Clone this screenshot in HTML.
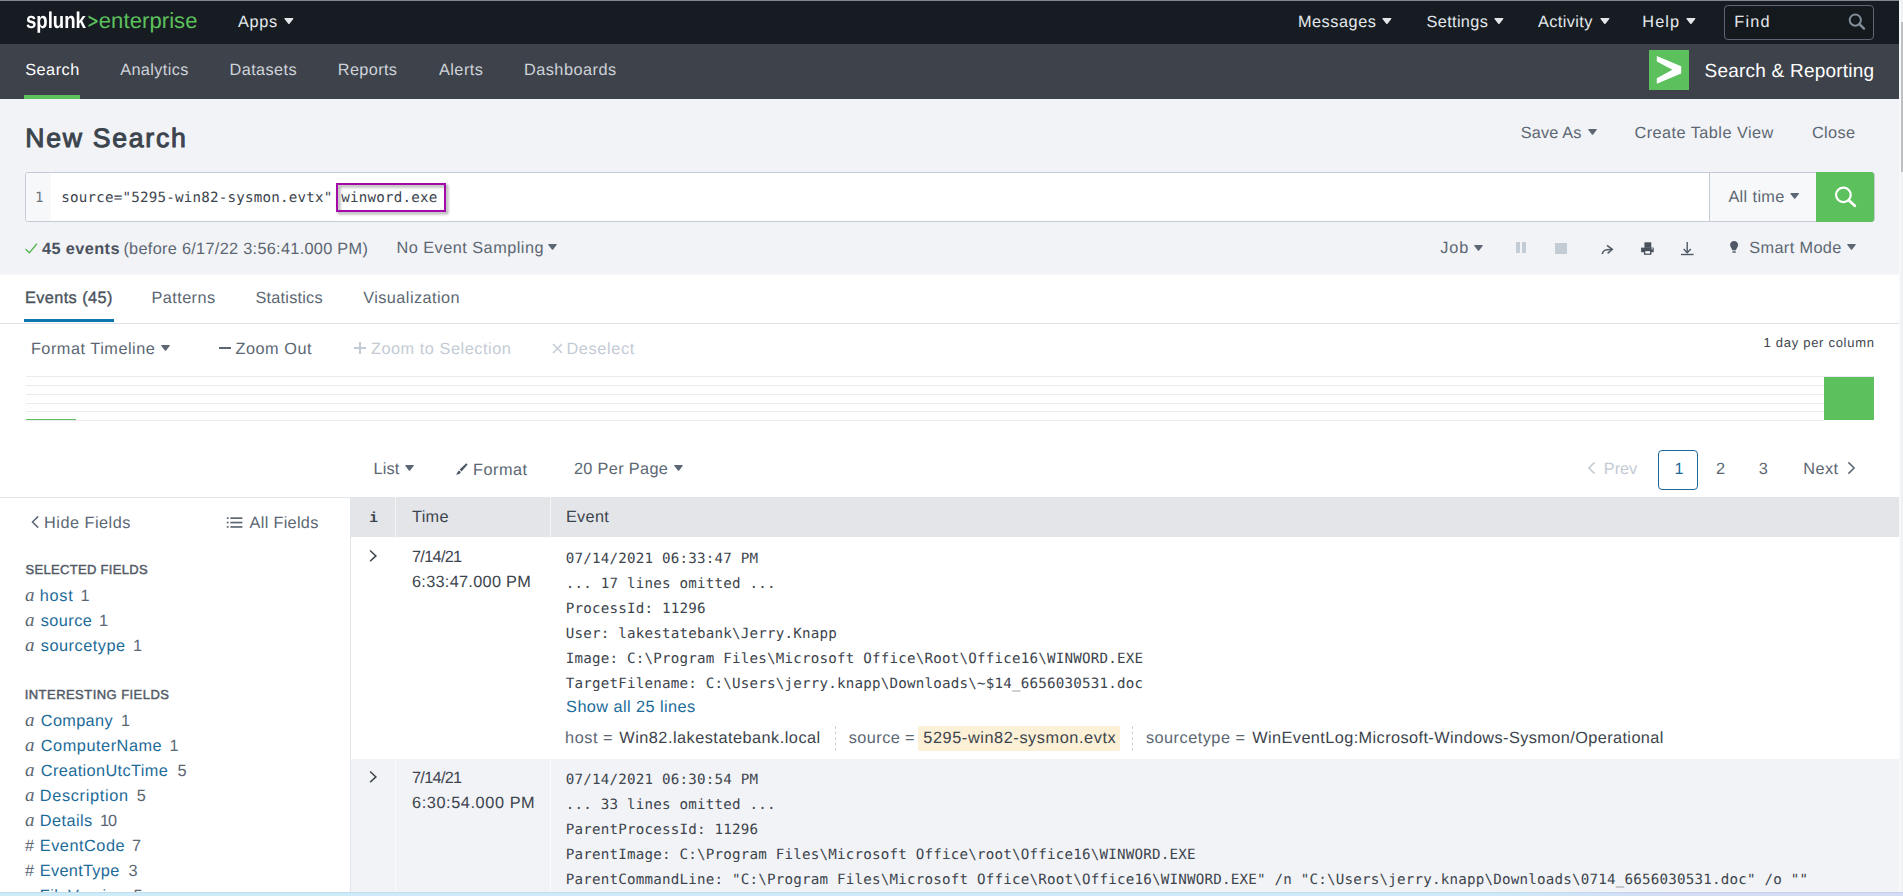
<!DOCTYPE html>
<html lang="en">
<head>
<meta charset="utf-8">
<title>Search | Splunk</title>
<style>
html,body{margin:0;padding:0;}
header,nav,main,section,aside{display:block;margin:0;padding:0;}
body{width:1903px;height:896px;overflow:hidden;position:relative;background:#f2f3f6;font-family:"Liberation Sans",sans-serif;text-rendering:geometricPrecision;-webkit-font-smoothing:antialiased;}
.a{position:absolute;}
.t{position:absolute;white-space:pre;height:0;line-height:0;}
.m{font:14.2px 'DejaVu Sans Mono','Liberation Mono',monospace;line-height:0;letter-spacing:0.2084px;}
svg{position:absolute;overflow:visible;}
.hl{position:absolute;background:#e9ebee;height:1px;left:26px;width:1848px;}
</style>
</head>
<body>
<svg width="0" height="0" style="display:none">
  <symbol id="caret" viewBox="0 0 9 6"><path d="M0.9 0 H8.1 Q9.4 0 8.6 1 L5.1 5.5 Q4.5 6.2 3.9 5.5 L0.4 1 Q-0.4 0 0.9 0 Z"/></symbol>
</svg>

<header class="topbar">
<!-- ===== top bar ===== -->
<div class="a" style="left:0;top:0;width:1899px;height:44px;background:#171c23"></div>
<div class="a" style="left:0;top:0;width:1899px;height:1px;background:#82858e"></div>
<!-- splunk > -->
<svg style="left:88px;top:15px" width="11" height="13" viewBox="0 0 11 13"><path d="M0.5 0.6 L9.6 5.3 V7.3 L0.5 12 V9.9 L7.3 6.3 L0.5 2.7 Z" fill="#5cc05c"/></svg>
<svg style="left:283.8px;top:17.9px" width="9.8" height="6.4" fill="#e4e8ec"><use href="#caret"/></svg>
<svg style="left:1382.4px;top:17.9px" width="9.8" height="6.4" fill="#e4e8ec"><use href="#caret"/></svg>
<svg style="left:1494.1px;top:17.9px" width="9.8" height="6.4" fill="#e4e8ec"><use href="#caret"/></svg>
<svg style="left:1599.5px;top:17.9px" width="9.8" height="6.4" fill="#e4e8ec"><use href="#caret"/></svg>
<svg style="left:1685.6px;top:17.9px" width="9.8" height="6.4" fill="#e4e8ec"><use href="#caret"/></svg>
<div class="a" style="left:1724px;top:5px;width:148px;height:33px;border:1px solid #5c6773;border-radius:4px;background:#14191d"></div>
<svg style="left:1848px;top:13px" width="18" height="17" viewBox="0 0 18 17" fill="none" stroke="#818d99" stroke-width="2"><circle cx="7.3" cy="7.1" r="5.6"/><path d="M11.4 11.2 L16 15.6" stroke-linecap="round" stroke-width="2.4"/></svg>

<div class="t gen" style="font:normal 700 22.8px 'Liberation Sans',sans-serif;line-height:0;color:#fff;left:25.80px;top:19.61px;transform:scaleX(0.8159);transform-origin:0 0;">splunk</div>
<div class="t gen" style="font:normal 400 22px 'Liberation Sans',sans-serif;line-height:0;color:#5cc05c;left:98.80px;top:20.61px;letter-spacing:0.090px;">enterprise</div>
<div class="t gen" style="font:normal 400 16.3px 'Liberation Sans',sans-serif;line-height:0;color:#e4e8ec;left:237.90px;top:22.00px;letter-spacing:0.710px;">Apps</div>
<div class="t gen" style="font:normal 400 16.3px 'Liberation Sans',sans-serif;line-height:0;color:#e4e8ec;left:1297.90px;top:22.00px;letter-spacing:0.548px;">Messages</div>
<div class="t gen" style="font:normal 400 16.3px 'Liberation Sans',sans-serif;line-height:0;color:#e4e8ec;left:1426.50px;top:22.00px;letter-spacing:0.359px;">Settings</div>
<div class="t gen" style="font:normal 400 16.3px 'Liberation Sans',sans-serif;line-height:0;color:#e4e8ec;left:1538.10px;top:22.00px;letter-spacing:0.383px;">Activity</div>
<div class="t gen" style="font:normal 400 16.3px 'Liberation Sans',sans-serif;line-height:0;color:#e4e8ec;left:1642.30px;top:22.00px;letter-spacing:1.123px;">Help</div>
<div class="t gen" style="font:normal 400 16.3px 'Liberation Sans',sans-serif;line-height:0;color:#e4e8ec;left:1734.30px;top:22.11px;letter-spacing:1.194px;">Find</div>
</header>
<nav class="appbar">
<!-- ===== app nav ===== -->
<div class="a" style="left:0;top:44px;width:1899px;height:54.5px;background:#3e424b"></div>
<div class="a" style="left:24px;top:94.5px;width:56px;height:4px;background:#5cc05c"></div>
<div class="a" style="left:1649px;top:50px;width:40px;height:40px;background:#5cc05c"></div>
<svg style="left:1649px;top:50px" width="40" height="40" viewBox="0 0 40 40"><path d="M7.8 5.9 L32.2 16.3 V23.5 L7.8 33.8 V28.2 L23.4 19.8 L7.8 11.5 Z" fill="#fff"/></svg>

<div class="t gen" style="font:normal 400 16.3px 'Liberation Sans',sans-serif;line-height:0;color:#fff;left:25.20px;top:70.11px;letter-spacing:0.494px;">Search</div>
<div class="t gen" style="font:normal 400 16.3px 'Liberation Sans',sans-serif;line-height:0;color:#ced3d9;left:120.20px;top:70.11px;letter-spacing:0.386px;">Analytics</div>
<div class="t gen" style="font:normal 400 16.3px 'Liberation Sans',sans-serif;line-height:0;color:#ced3d9;left:229.60px;top:70.11px;letter-spacing:0.384px;">Datasets</div>
<div class="t gen" style="font:normal 400 16.3px 'Liberation Sans',sans-serif;line-height:0;color:#ced3d9;left:337.80px;top:70.11px;letter-spacing:0.355px;">Reports</div>
<div class="t gen" style="font:normal 400 16.3px 'Liberation Sans',sans-serif;line-height:0;color:#ced3d9;left:438.90px;top:70.11px;letter-spacing:0.485px;">Alerts</div>
<div class="t gen" style="font:normal 400 16.3px 'Liberation Sans',sans-serif;line-height:0;color:#ced3d9;left:523.90px;top:70.11px;letter-spacing:0.506px;">Dashboards</div>
<div class="t gen" style="font:normal 400 19px 'Liberation Sans',sans-serif;line-height:0;color:#fff;left:1704.60px;top:72.00px;letter-spacing:0.215px;">Search &amp; Reporting</div>
</nav>
<main>
<section class="search-head">
<!-- ===== title row ===== -->
<svg style="left:1587.9px;top:129.3px" width="9" height="6" fill="#5c6773"><use href="#caret"/></svg>

<!-- ===== search bar ===== -->
<div class="a" style="left:25px;top:172px;width:1848px;height:48px;border:1px solid #c3cbd4;border-radius:3px;background:#fff"></div>
<div class="a" style="left:26px;top:173px;width:25px;height:48px;background:#f7f8fa;border-radius:2px 0 0 2px"></div>
<div class="a" style="left:1709px;top:173px;width:1px;height:48px;background:#c3cbd4"></div>
<div class="a" style="left:1710px;top:173px;width:106px;height:48px;background:#f7f8fa"></div>
<div class="a" style="left:1816px;top:172px;width:58px;height:50px;background:#5cc05c;border-radius:0 3px 3px 0"></div>
<svg style="left:1833px;top:185px" width="26" height="24" viewBox="0 0 26 24" fill="none" stroke="#fff" stroke-width="2.2"><circle cx="10.4" cy="9.9" r="7.3"/><path d="M15.8 15.3 L21.8 20.8" stroke-linecap="round" stroke-width="2.8"/></svg>
<svg style="left:1789.8px;top:193.2px" width="9.4" height="6" fill="#5c6773"><use href="#caret"/></svg>
<!-- purple annotation -->
<div class="a" style="left:336px;top:183px;width:106px;height:25px;border:2px solid #a40aa8;filter:drop-shadow(2px 2px 1.5px rgba(60,60,60,.55))"></div>

<!-- ===== status row ===== -->
<svg style="left:24px;top:242px" width="15" height="13" viewBox="0 0 15 13" fill="none" stroke="#56b356" stroke-width="1.35"><path d="M1.6 7.2 L5.4 10.8 L12.9 1.8"/></svg>
<svg style="left:548.2px;top:244.3px" width="9" height="6" fill="#5c6773"><use href="#caret"/></svg>
<svg style="left:1473.5px;top:245.2px" width="9" height="6" fill="#5c6773"><use href="#caret"/></svg>
<div class="a" style="left:1516px;top:242.3px;width:4px;height:11.2px;background:#c3cbd4"></div>
<div class="a" style="left:1522.3px;top:242.3px;width:4px;height:11.2px;background:#c3cbd4"></div>
<div class="a" style="left:1555.2px;top:242.5px;width:11.4px;height:11px;background:#c3cbd4"></div>
<svg style="left:1600px;top:243px" width="15" height="13" viewBox="0 0 15 13" fill="none" stroke="#4f5965" stroke-width="1.5"><path d="M2.2 11.2 C3 7 6 6.3 11.6 6.4"/><path d="M7.0 2.4 L12.3 6.4 L7.6 10.3"/></svg>
<svg style="left:1640px;top:241px" width="15" height="15" viewBox="0 0 15 15"><path d="M4.4 1.3 H11.3 V6.8 H4.4 Z" fill="#48515c"/><path d="M1.1 6.6 H13.7 V11.2 H1.1 Z" fill="#48515c"/><path d="M3.9 9.4 H11.4 V13.8 H3.9 Z" fill="#48515c"/><path d="M5.3 10.2 H10 V12.5 H5.3 Z" fill="#fff"/><rect x="11.4" y="7.4" width="1.3" height="1" fill="#fff"/></svg>
<svg style="left:1680px;top:241px" width="15" height="15" viewBox="0 0 15 15" fill="none" stroke="#4f5965" stroke-width="1.4"><path d="M7.2 1.1 V11.6"/><path d="M3.7 8 L7.2 11.8 L10.8 8"/><path d="M0.9 13.5 H13.6"/></svg>
<svg style="left:1729px;top:240px" width="11" height="14" viewBox="0 0 11 14" fill="#4f5965"><path d="M5.1 1 C7.6 1 9.1 2.8 9.1 4.9 C9.1 6.8 7.6 7.8 6.9 10.3 H3.3 C2.6 7.8 1.1 6.8 1.1 4.9 C1.1 2.8 2.6 1 5.1 1 Z"/><rect x="3.4" y="11.3" width="3.4" height="1.4" rx=".4"/></svg>
<svg style="left:1847px;top:244.3px" width="9" height="6" fill="#5c6773"><use href="#caret"/></svg>

<div class="t gen" style="font:normal 400 26.6px 'Liberation Sans',sans-serif;line-height:0;color:#3c444d;left:25.20px;top:138.30px;letter-spacing:1.749px;-webkit-text-stroke:1.0px #3c444d;">New Search</div>
<div class="t gen" style="font:normal 400 16.3px 'Liberation Sans',sans-serif;line-height:0;color:#5c6773;left:1520.80px;top:133.11px;letter-spacing:0.151px;">Save As</div>
<div class="t gen" style="font:normal 400 16.3px 'Liberation Sans',sans-serif;line-height:0;color:#5c6773;left:1634.50px;top:133.11px;letter-spacing:0.452px;">Create Table View</div>
<div class="t gen" style="font:normal 400 16.3px 'Liberation Sans',sans-serif;line-height:0;color:#5c6773;left:1811.90px;top:133.11px;letter-spacing:0.407px;">Close</div>
<div class="t gen" style="font:normal 400 16.3px 'Liberation Sans',sans-serif;line-height:0;color:#5c6773;left:1728.40px;top:196.91px;letter-spacing:0.369px;">All time</div>
<div class="t gen" style="font:normal 700 16.3px 'Liberation Sans',sans-serif;line-height:0;color:#4a525e;left:42.00px;top:248.50px;letter-spacing:0.404px;">45 events</div>
<div class="t gen" style="font:normal 400 16.3px 'Liberation Sans',sans-serif;line-height:0;color:#5c6773;left:123.40px;top:248.50px;letter-spacing:0.303px;">(before 6/17/22 3:56:41.000 PM)</div>
<div class="t gen" style="font:normal 400 16.3px 'Liberation Sans',sans-serif;line-height:0;color:#5c6773;left:396.40px;top:248.30px;letter-spacing:0.487px;">No Event Sampling</div>
<div class="t gen" style="font:normal 400 16.3px 'Liberation Sans',sans-serif;line-height:0;color:#5c6773;left:1440.30px;top:248.41px;letter-spacing:0.852px;">Job</div>
<div class="t gen" style="font:normal 400 16.3px 'Liberation Sans',sans-serif;line-height:0;color:#5c6773;left:1749.20px;top:248.30px;letter-spacing:0.387px;">Smart Mode</div>
<div class="t m gen" style="left:61.30px;top:197.71px;color:#3c444d;">source=&quot;5295-win82-sysmon.evtx&quot; winword.exe</div>
<div class="t m gen" style="left:35.00px;top:197.71px;color:#6b7580;">1</div>
</section>
<section class="results-controls">
<!-- ===== white content ===== -->
<div class="a" style="left:0;top:274px;width:1899px;height:622px;background:#fff"></div>
<div class="a" style="left:0;top:274px;width:1899px;height:1px;background:#f9fafa"></div>
<div class="a" style="left:24px;top:318.6px;width:90px;height:3.8px;background:#0e75ad"></div>
<div class="a" style="left:0;top:323px;width:1899px;height:1px;background:#dfe3e8"></div>

<!-- timeline controls -->
<svg style="left:160.8px;top:345.4px" width="9" height="6" fill="#5c6773"><use href="#caret"/></svg>
<div class="a" style="left:218.6px;top:346.6px;width:12.2px;height:2px;background:#5c6773"></div>
<div class="a" style="left:354.1px;top:346.9px;width:12.2px;height:1.9px;background:#c3cbd4"></div>
<div class="a" style="left:359.3px;top:341.8px;width:1.9px;height:12.2px;background:#c3cbd4"></div>
<svg style="left:552px;top:342.5px" width="11" height="11" viewBox="0 0 11 11" stroke="#c3cbd4" stroke-width="1.5"><path d="M1 1 L10 10 M10 1 L1 10"/></svg>

<!-- timeline -->
<div class="hl" style="top:376px"></div>
<div class="hl" style="top:385px"></div>
<div class="hl" style="top:394px"></div>
<div class="hl" style="top:402.5px"></div>
<div class="hl" style="top:411px"></div>
<div class="hl" style="top:420px;width:1798px"></div>
<div class="a" style="left:26px;top:418.6px;width:50px;height:1.6px;background:#5cc05c"></div>
<div class="a" style="left:1824px;top:377.4px;width:50px;height:42.6px;background:#5cc05c"></div>

<!-- list row -->
<svg style="left:405.1px;top:465.1px" width="9" height="6" fill="#5c6773"><use href="#caret"/></svg>
<svg style="left:455px;top:462px" width="14" height="14" viewBox="0 0 14 14" fill="#4f5965"><path d="M11.2 1.2 L12.6 2.6 L6.6 9.4 L4.6 7.6 Z"/><path d="M4 8.4 L5.8 10.1 C5 12.4 2.6 12.9 0.8 12.4 C2.4 11.6 2.2 9.4 4 8.4 Z"/></svg>
<svg style="left:673.6px;top:465.1px" width="9" height="6" fill="#5c6773"><use href="#caret"/></svg>
<svg style="left:1587px;top:461px" width="10" height="14" viewBox="0 0 10 14" fill="none" stroke="#c3cbd4" stroke-width="1.5"><path d="M7.6 1.4 L1.9 7 L7.6 12.6"/></svg>
<div class="a" style="left:1658px;top:450px;width:38px;height:38px;border:1px solid #1c6b99;border-radius:4px"></div>
<svg style="left:1846px;top:461px" width="10" height="14" viewBox="0 0 10 14" fill="none" stroke="#5c6773" stroke-width="1.5"><path d="M2.4 1.4 L8.1 7 L2.4 12.6"/></svg>

<div class="t gen" style="font:normal 400 16.3px 'Liberation Sans',sans-serif;line-height:0;color:#4a525c;left:24.88px;top:298.30px;letter-spacing:0.422px;-webkit-text-stroke:0.35px #4a525c;">Events (45)</div>
<div class="t gen" style="font:normal 400 16.3px 'Liberation Sans',sans-serif;line-height:0;color:#5c6773;left:151.60px;top:298.30px;letter-spacing:0.401px;">Patterns</div>
<div class="t gen" style="font:normal 400 16.3px 'Liberation Sans',sans-serif;line-height:0;color:#5c6773;left:255.50px;top:298.30px;letter-spacing:0.211px;">Statistics</div>
<div class="t gen" style="font:normal 400 16.3px 'Liberation Sans',sans-serif;line-height:0;color:#5c6773;left:363.20px;top:298.30px;letter-spacing:0.445px;">Visualization</div>
<div class="t gen" style="font:normal 400 16.3px 'Liberation Sans',sans-serif;line-height:0;color:#5c6773;left:30.90px;top:348.80px;letter-spacing:0.518px;">Format Timeline</div>
<div class="t gen" style="font:normal 400 16.3px 'Liberation Sans',sans-serif;line-height:0;color:#5c6773;left:235.40px;top:348.80px;letter-spacing:0.549px;">Zoom Out</div>
<div class="t gen" style="font:normal 400 16.3px 'Liberation Sans',sans-serif;line-height:0;color:#c3cbd4;left:370.90px;top:348.80px;letter-spacing:0.546px;">Zoom to Selection</div>
<div class="t gen" style="font:normal 400 16.3px 'Liberation Sans',sans-serif;line-height:0;color:#c3cbd4;left:566.40px;top:348.80px;letter-spacing:0.640px;">Deselect</div>
<div class="t gen" style="font:normal 400 13px 'Liberation Sans',sans-serif;line-height:0;color:#3c444d;left:1763.50px;top:343.21px;letter-spacing:0.714px;">1 day per column</div>
<div class="t gen" style="font:normal 400 16.3px 'Liberation Sans',sans-serif;line-height:0;color:#5c6773;left:373.60px;top:468.61px;letter-spacing:0.129px;">List</div>
<div class="t gen" style="font:normal 400 16.3px 'Liberation Sans',sans-serif;line-height:0;color:#5c6773;left:473.00px;top:469.71px;letter-spacing:0.512px;">Format</div>
<div class="t gen" style="font:normal 400 16.3px 'Liberation Sans',sans-serif;line-height:0;color:#5c6773;left:573.90px;top:468.61px;letter-spacing:0.344px;">20 Per Page</div>
<div class="t gen" style="font:normal 400 16.3px 'Liberation Sans',sans-serif;line-height:0;color:#c3cbd4;left:1603.80px;top:468.61px;letter-spacing:-0.012px;">Prev</div>
<div class="t gen" style="font:normal 400 16.3px 'Liberation Sans',sans-serif;line-height:0;color:#1c6b99;left:1674.40px;top:468.61px;">1</div>
<div class="t gen" style="font:normal 400 16.3px 'Liberation Sans',sans-serif;line-height:0;color:#5c6773;left:1716.00px;top:468.61px;">2</div>
<div class="t gen" style="font:normal 400 16.3px 'Liberation Sans',sans-serif;line-height:0;color:#5c6773;left:1758.70px;top:468.61px;">3</div>
<div class="t gen" style="font:normal 400 16.3px 'Liberation Sans',sans-serif;line-height:0;color:#5c6773;left:1803.20px;top:468.61px;letter-spacing:0.449px;">Next</div>
</section>
<aside class="fields-sidebar">
<!-- sidebar -->
<div class="a" style="left:0;top:497px;width:351px;height:1px;background:#e1e6eb"></div>
<div class="a" style="left:350px;top:497px;width:1px;height:399px;background:#e1e6eb"></div>
<svg style="left:30px;top:515px" width="10" height="14" viewBox="0 0 10 14" fill="none" stroke="#5c6773" stroke-width="1.5"><path d="M8.2 1.4 L2.5 7 L8.2 12.6"/></svg>
<svg style="left:226px;top:515.5px" width="17" height="13" viewBox="0 0 17 13" fill="#5c6773"><rect x="0.8" y="1.3" width="1.8" height="1.7"/><rect x="4.4" y="1.3" width="12" height="1.7"/><rect x="0.8" y="5.7" width="1.8" height="1.7"/><rect x="4.4" y="5.7" width="12" height="1.7"/><rect x="0.8" y="10.1" width="1.8" height="1.7"/><rect x="4.4" y="10.1" width="12" height="1.7"/></svg>

<div class="t gen" style="font:normal 400 16.3px 'Liberation Sans',sans-serif;line-height:0;color:#5c6773;left:44.10px;top:523.00px;letter-spacing:0.480px;">Hide Fields</div>
<div class="t gen" style="font:normal 400 16.3px 'Liberation Sans',sans-serif;line-height:0;color:#5c6773;left:249.60px;top:523.00px;letter-spacing:0.299px;">All Fields</div>
<div class="t gen" style="font:normal 400 13px 'Liberation Sans',sans-serif;line-height:0;color:#525a67;left:25.62px;top:569.71px;letter-spacing:0.305px;-webkit-text-stroke:0.45px #525a67;">SELECTED FIELDS</div>
<div class="t gen" style="font:normal 400 13px 'Liberation Sans',sans-serif;line-height:0;color:#525a67;left:24.73px;top:694.61px;letter-spacing:0.453px;-webkit-text-stroke:0.45px #525a67;">INTERESTING FIELDS</div>
<div class="t gen" style="font:italic 400 19px 'Liberation Serif',serif;line-height:0;color:#5c6773;left:25.10px;top:595.50px;">a</div>
<div class="t gen" style="font:normal 400 16.3px 'Liberation Sans',sans-serif;line-height:0;color:#1c6b99;left:39.80px;top:595.50px;letter-spacing:0.717px;">host</div>
<div class="t gen" style="font:normal 400 16.3px 'Liberation Sans',sans-serif;line-height:0;color:#5c6773;left:80.50px;top:595.50px;">1</div>
<div class="t gen" style="font:italic 400 19px 'Liberation Serif',serif;line-height:0;color:#5c6773;left:25.10px;top:620.50px;">a</div>
<div class="t gen" style="font:normal 400 16.3px 'Liberation Sans',sans-serif;line-height:0;color:#1c6b99;left:40.80px;top:620.50px;letter-spacing:0.437px;">source</div>
<div class="t gen" style="font:normal 400 16.3px 'Liberation Sans',sans-serif;line-height:0;color:#5c6773;left:99.10px;top:620.50px;">1</div>
<div class="t gen" style="font:italic 400 19px 'Liberation Serif',serif;line-height:0;color:#5c6773;left:25.10px;top:645.50px;">a</div>
<div class="t gen" style="font:normal 400 16.3px 'Liberation Sans',sans-serif;line-height:0;color:#1c6b99;left:40.80px;top:645.50px;letter-spacing:0.524px;">sourcetype</div>
<div class="t gen" style="font:normal 400 16.3px 'Liberation Sans',sans-serif;line-height:0;color:#5c6773;left:133.00px;top:645.50px;">1</div>
<div class="t gen" style="font:italic 400 19px 'Liberation Serif',serif;line-height:0;color:#5c6773;left:25.10px;top:721.00px;">a</div>
<div class="t gen" style="font:normal 400 16.3px 'Liberation Sans',sans-serif;line-height:0;color:#1c6b99;left:40.80px;top:721.00px;letter-spacing:0.343px;">Company</div>
<div class="t gen" style="font:normal 400 16.3px 'Liberation Sans',sans-serif;line-height:0;color:#5c6773;left:120.90px;top:721.00px;">1</div>
<div class="t gen" style="font:italic 400 19px 'Liberation Serif',serif;line-height:0;color:#5c6773;left:25.10px;top:746.00px;">a</div>
<div class="t gen" style="font:normal 400 16.3px 'Liberation Sans',sans-serif;line-height:0;color:#1c6b99;left:40.80px;top:746.00px;letter-spacing:0.540px;">ComputerName</div>
<div class="t gen" style="font:normal 400 16.3px 'Liberation Sans',sans-serif;line-height:0;color:#5c6773;left:169.50px;top:746.00px;">1</div>
<div class="t gen" style="font:italic 400 19px 'Liberation Serif',serif;line-height:0;color:#5c6773;left:25.10px;top:771.00px;">a</div>
<div class="t gen" style="font:normal 400 16.3px 'Liberation Sans',sans-serif;line-height:0;color:#1c6b99;left:40.80px;top:771.00px;letter-spacing:0.387px;">CreationUtcTime</div>
<div class="t gen" style="font:normal 400 16.3px 'Liberation Sans',sans-serif;line-height:0;color:#5c6773;left:177.50px;top:771.00px;">5</div>
<div class="t gen" style="font:italic 400 19px 'Liberation Serif',serif;line-height:0;color:#5c6773;left:25.10px;top:796.00px;">a</div>
<div class="t gen" style="font:normal 400 16.3px 'Liberation Sans',sans-serif;line-height:0;color:#1c6b99;left:39.80px;top:796.00px;letter-spacing:0.672px;">Description</div>
<div class="t gen" style="font:normal 400 16.3px 'Liberation Sans',sans-serif;line-height:0;color:#5c6773;left:136.80px;top:796.00px;">5</div>
<div class="t gen" style="font:italic 400 19px 'Liberation Serif',serif;line-height:0;color:#5c6773;left:25.10px;top:821.00px;">a</div>
<div class="t gen" style="font:normal 400 16.3px 'Liberation Sans',sans-serif;line-height:0;color:#1c6b99;left:39.80px;top:821.00px;letter-spacing:0.446px;">Details</div>
<div class="t gen" style="font:normal 400 16.3px 'Liberation Sans',sans-serif;line-height:0;color:#5c6773;left:100.00px;top:821.00px;letter-spacing:-0.955px;">10</div>
<div class="t gen" style="font:normal 400 16.3px 'Liberation Sans',sans-serif;line-height:0;color:#5c6773;left:25.00px;top:846.00px;">#</div>
<div class="t gen" style="font:normal 400 16.3px 'Liberation Sans',sans-serif;line-height:0;color:#1c6b99;left:39.80px;top:846.00px;letter-spacing:0.525px;">EventCode</div>
<div class="t gen" style="font:normal 400 16.3px 'Liberation Sans',sans-serif;line-height:0;color:#5c6773;left:132.10px;top:846.00px;">7</div>
<div class="t gen" style="font:normal 400 16.3px 'Liberation Sans',sans-serif;line-height:0;color:#5c6773;left:25.00px;top:871.00px;">#</div>
<div class="t gen" style="font:normal 400 16.3px 'Liberation Sans',sans-serif;line-height:0;color:#1c6b99;left:39.80px;top:871.00px;letter-spacing:0.316px;">EventType</div>
<div class="t gen" style="font:normal 400 16.3px 'Liberation Sans',sans-serif;line-height:0;color:#5c6773;left:128.40px;top:871.00px;">3</div>
<div class="t gen" style="font:italic 400 19px 'Liberation Serif',serif;line-height:0;color:#5c6773;left:25.10px;top:896.00px;">a</div>
<div class="t gen" style="font:normal 400 16.3px 'Liberation Sans',sans-serif;line-height:0;color:#1c6b99;left:39.80px;top:896.00px;letter-spacing:0.492px;">FileVersion</div>
<div class="t gen" style="font:normal 400 16.3px 'Liberation Sans',sans-serif;line-height:0;color:#5c6773;left:133.40px;top:896.00px;">5</div>
</aside>
<section class="events-table">
<!-- table -->
<div class="a" style="left:351px;top:497px;width:1548px;height:40px;background:#e3e5e9"></div>
<div class="a" style="left:351px;top:759px;width:1548px;height:137px;background:#f2f3f6"></div>
<div class="a" style="left:395px;top:497px;width:1px;height:40px;background:#f4f6f7"></div>
<div class="a" style="left:550px;top:497px;width:1px;height:40px;background:#f4f6f7"></div>
<div class="a" style="left:395px;top:759px;width:1px;height:137px;background:#fbfcfc"></div>
<div class="a" style="left:550px;top:759px;width:1px;height:137px;background:#fbfcfc"></div>
<svg style="left:368px;top:549px" width="10" height="14" viewBox="0 0 10 14" fill="none" stroke="#3c444d" stroke-width="1.5"><path d="M2.1 1.5 L7.9 6.9 L2.1 12.3"/></svg>
<svg style="left:368px;top:770px" width="10" height="14" viewBox="0 0 10 14" fill="none" stroke="#3c444d" stroke-width="1.5"><path d="M2.1 1.5 L7.9 6.9 L2.1 12.3"/></svg>
<!-- field separators + highlight -->
<div class="a" style="left:835px;top:726px;width:0;height:25px;border-left:1px dashed #ccd1d8"></div>
<div class="a" style="left:1132px;top:726px;width:0;height:25px;border-left:1px dashed #ccd1d8"></div>
<div class="a" style="left:918px;top:726px;width:201.6px;height:25px;background:#fcf0d6;border-radius:2px"></div>

<div class="t gen" style="font:normal 700 14.6px 'Liberation Mono',monospace;line-height:0;color:#3c444d;left:369.30px;top:518.50px;">i</div>
<div class="t gen" style="font:normal 400 16.3px 'Liberation Sans',sans-serif;line-height:0;color:#3c444d;left:412.00px;top:516.50px;letter-spacing:0.327px;">Time</div>
<div class="t gen" style="font:normal 400 16.3px 'Liberation Sans',sans-serif;line-height:0;color:#3c444d;left:565.90px;top:516.50px;letter-spacing:0.323px;">Event</div>
<div class="t gen" style="font:normal 400 16.3px 'Liberation Sans',sans-serif;line-height:0;color:#3c444d;left:412.00px;top:556.80px;letter-spacing:-0.694px;">7/14/21</div>
<div class="t gen" style="font:normal 400 16.3px 'Liberation Sans',sans-serif;line-height:0;color:#3c444d;left:412.00px;top:581.71px;letter-spacing:0.293px;">6:33:47.000 PM</div>
<div class="t gen" style="font:normal 400 16.3px 'Liberation Sans',sans-serif;line-height:0;color:#1c6b99;left:566.10px;top:707.00px;letter-spacing:0.429px;">Show all 25 lines</div>
<div class="t gen" style="font:normal 400 16.3px 'Liberation Sans',sans-serif;line-height:0;color:#5c6773;left:565.10px;top:738.21px;letter-spacing:0.521px;">host =</div>
<div class="t gen" style="font:normal 400 16.3px 'Liberation Sans',sans-serif;line-height:0;color:#3c444d;left:619.30px;top:738.21px;letter-spacing:0.490px;">Win82.lakestatebank.local</div>
<div class="t gen" style="font:normal 400 16.3px 'Liberation Sans',sans-serif;line-height:0;color:#5c6773;left:848.80px;top:738.21px;letter-spacing:0.416px;">source =</div>
<div class="t gen" style="font:normal 400 16.3px 'Liberation Sans',sans-serif;line-height:0;color:#3c444d;left:923.30px;top:738.21px;letter-spacing:0.589px;">5295-win82-sysmon.evtx</div>
<div class="t gen" style="font:normal 400 16.3px 'Liberation Sans',sans-serif;line-height:0;color:#5c6773;left:1145.90px;top:738.21px;letter-spacing:0.494px;">sourcetype =</div>
<div class="t gen" style="font:normal 400 16.3px 'Liberation Sans',sans-serif;line-height:0;color:#3c444d;left:1252.30px;top:738.21px;letter-spacing:0.411px;">WinEventLog:Microsoft-Windows-Sysmon/Operational</div>
<div class="t gen" style="font:normal 400 16.3px 'Liberation Sans',sans-serif;line-height:0;color:#3c444d;left:412.00px;top:777.80px;letter-spacing:-0.694px;">7/14/21</div>
<div class="t gen" style="font:normal 400 16.3px 'Liberation Sans',sans-serif;line-height:0;color:#3c444d;left:412.00px;top:802.80px;letter-spacing:0.593px;">6:30:54.000 PM</div>
<div class="t m gen" style="left:565.80px;top:558.91px;color:#3c444d;">07/14/2021 06:33:47 PM</div>
<div class="t m gen" style="left:565.80px;top:583.91px;color:#3c444d;">... 17 lines omitted ...</div>
<div class="t m gen" style="left:565.80px;top:608.91px;color:#3c444d;">ProcessId: 11296</div>
<div class="t m gen" style="left:565.80px;top:633.91px;color:#3c444d;">User: lakestatebank\Jerry.Knapp</div>
<div class="t m gen" style="left:565.80px;top:658.91px;color:#3c444d;">Image: C:\Program Files\Microsoft Office\Root\Office16\WINWORD.EXE</div>
<div class="t m gen" style="left:565.80px;top:683.91px;color:#3c444d;">TargetFilename: C:\Users\jerry.knapp\Downloads\~$14_6656030531.doc</div>
<div class="t m gen" style="left:565.80px;top:779.80px;color:#3c444d;">07/14/2021 06:30:54 PM</div>
<div class="t m gen" style="left:565.80px;top:804.80px;color:#3c444d;">... 33 lines omitted ...</div>
<div class="t m gen" style="left:565.80px;top:829.80px;color:#3c444d;">ParentProcessId: 11296</div>
<div class="t m gen" style="left:565.80px;top:854.80px;color:#3c444d;">ParentImage: C:\Program Files\Microsoft Office\root\Office16\WINWORD.EXE</div>
<div class="t m gen" style="left:565.80px;top:879.80px;color:#3c444d;">ParentCommandLine: &quot;C:\Program Files\Microsoft Office\Root\Office16\WINWORD.EXE&quot; /n &quot;C:\Users\jerry.knapp\Downloads\0714_6656030531.doc&quot; /o &quot;&quot;</div>
</section>
</main>


<!-- bottom strip + scrollbar -->
<div class="a" style="left:0;top:892px;width:1903px;height:4px;background:linear-gradient(90deg,#cdebf8 0%,#cdebf8 78%,#d4dcf5 88%,#d4dcf5 100%)"></div>
<div class="a" style="left:0;top:892px;width:1903px;height:1px;background:rgba(120,140,150,.15)"></div>
<div class="a" style="left:1899px;top:0;width:4px;height:892px;background:linear-gradient(90deg,#f7f8f9 0,#f7f8f9 50%,#f0f1f2 50%,#f0f1f2 100%)"></div>
<div class="a" style="left:1901px;top:22px;width:2px;height:150px;background:#bebfc0"></div>
</body>
</html>
